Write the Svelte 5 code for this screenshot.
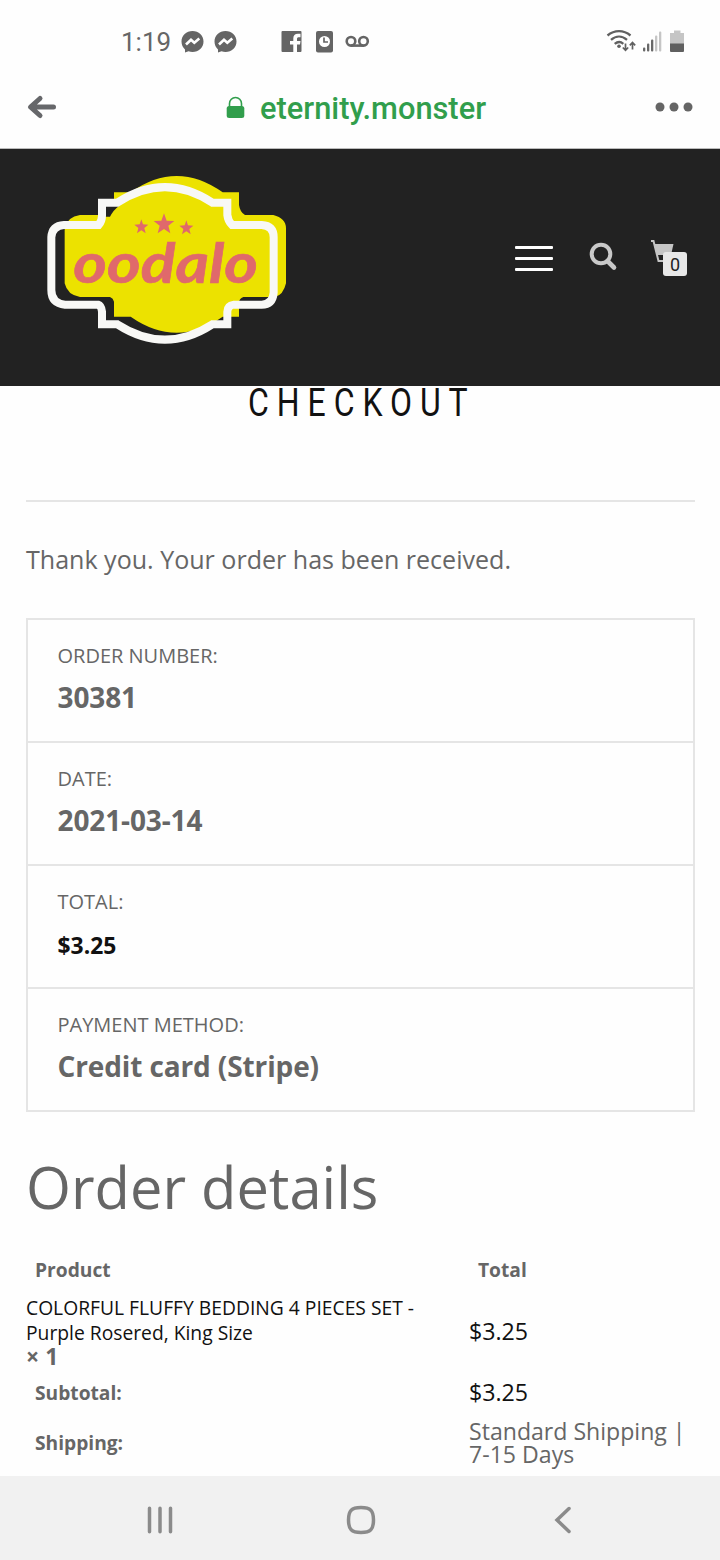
<script>
  const summary = [
    { label: 'ORDER NUMBER:', value: '30381' },
    { label: 'DATE:', value: '2021-03-14' },
    { label: 'TOTAL:', value: '$3.25', price: true },
    { label: 'PAYMENT METHOD:', value: 'Credit card (Stripe)' }
  ];
</script>

<div class="screen">
  <div class="status">
    <span class="time">1:19</span>
    <svg class="left-icons" width="198" height="28" viewBox="0 0 198 28">
      <g fill="#656565">
        <path d="M12.500 3C6.400 3 1.500 7.500 1.500 13.500c0 3.200 1.300 6 3.500 7.900V24.500l3.500-1.200c1.300.5 2.600.7 4 .7 6.200 0 11-4.600 11-10.500S18.700 3 12.500 3z" />
        <path d="M45.500 3c-6.100 0-11 4.500-11 10.500 0 3.200 1.300 6 3.500 7.900V24.500l3.500-1.200c1.300.5 2.600.7 4 .7 6.200 0 11-4.600 11-10.500S51.700 3 45.500 3z" />
        <path d="M102.500 3h18a1 1 0 0 1 1 1v19a1 1 0 0 1-1 1h-3.500v-7.500h3L120.500 13H117v-2c0-1.200.5-1.800 1.900-1.800h1.600V5.800h-2.600c-3 0-4.600 1.700-4.600 4.600V13H110v3.500h3.300V24h-10.800a1 1 0 0 1-1-1V4a1 1 0 0 1 1-1z" />
        <rect x="136" y="3" width="17" height="21.500" rx="2" />
      </g>
      <g fill="none" stroke="#fff" stroke-width="2.600">
        <path d="M6 16.500l5-4.800 3.300 3 5-4.200" />
        <path d="M39 16.500l5-4.800 3.300 3 5-4.200" />
      </g>
      <circle cx="144.500" cy="13.500" r="5.500" fill="#fff" />
      <path d="M144 9.500v4.500h4" fill="none" stroke="#656565" stroke-width="1.700" />
      <g fill="none" stroke="#656565" stroke-width="2.600">
        <circle cx="171" cy="13.300" r="4.300" />
        <circle cx="183.500" cy="13.300" r="4.300" />
        <path d="M171 17.600h12.500" />
      </g>
    </svg>
    <svg class="right-icons" width="84" height="28" viewBox="0 0 84 28">
      <g fill="none" stroke="#606060" stroke-width="2.300">
        <path d="M4.500 7.500c7-5.800 16-5.800 23 0" />
        <path d="M8 11.800c5-4.300 11-4.300 16 0" />
        <path d="M11.700 15.800c3-2.400 6-2.400 8.600 0" />
        <path d="M22.500 15.500v7M19.800 19.500l2.700 2.800 2.700-2.800M29.500 21.500v-7M26.800 17.300l2.700-2.800 2.700 2.800" stroke-width="1.700" />
      </g>
      <circle cx="16" cy="18.300" r="1.800" fill="#606060" />
      <g fill="#686868">
        <rect x="40" y="19.500" width="2.300" height="4" rx="1" />
        <rect x="44" y="15.500" width="2.300" height="8" rx="1" />
        <rect x="48" y="11.500" width="2.300" height="12" rx="1" />
      </g>
      <g fill="#c5c5c5">
        <rect x="52" y="7.500" width="2.300" height="16" rx="1" />
        <rect x="56" y="3.500" width="2.300" height="20" rx="1" />
        <path d="M67 5h4V2.500h6.500V5H81v11H67z" />
      </g>
      <path d="M67 15.500h14v7.500a1 1 0 0 1-1 1H68a1 1 0 0 1-1-1z" fill="#606060" />
    </svg>
  </div>

  <div class="address">
    <svg class="back" width="32" height="26" viewBox="0 0 32 26">
      <path d="M14 4.500L4.500 13l9.500 8.500M5 13h22.500" fill="none" stroke="#66676a" stroke-width="5" stroke-linecap="round" stroke-linejoin="round" />
    </svg>
    <svg class="lock" width="20" height="26" viewBox="0 0 20 26">
      <rect x=".7" y="12" width="17.600" height="12" rx="2.500" fill="#319e4c" />
      <path d="M3.500 13V9.500a6 6 0 0 1 12 0V13" fill="none" stroke="#319e4c" stroke-width="1.600" />
    </svg>
    <span class="domain">eternity.monster</span>
    <svg class="more" width="40" height="12" viewBox="0 0 40 12" fill="#656565">
      <circle cx="6" cy="6" r="4.500" /><circle cx="20" cy="6" r="4.500" /><circle cx="34" cy="6" r="4.500" />
    </svg>
  </div>

  <header>
    <svg class="logo" width="280" height="190" viewBox="0 0 840 570">
      <path fill="#ece200" d="M150 150H236Q250 142 252 120V82H302Q440-16 578 82H627V120Q630 142 645 150H730Q768 160 768 190V355Q760 390 735 396H640Q627 400 627 415V455H578Q440 551 302 455H252V410Q250 400 240 396H150Q112 390 104 355V190Q112 155 150 150Z" />
      <path fill="#222" d="M226 122H268Q250 135 240 155H223Z" />
      <path fill="none" stroke="#f8f8f6" stroke-width="24" d="M102 180H206Q216 168 216 152V113H262Q405 20 547 113H592V150Q594 168 606 180H695Q731 182 731 217V383Q728 419 695 419H612Q592 422 592 440V478H547Q405 570 262 478H216V440Q214 422 204 419H105Q64 415 64 375V217Q66 182 102 180Z" />
      <g fill="#e0696b">
        <path d="M402 145l8 22 23 1-18 14 6 23-19-13-19 13 6-23-18-14 23-1z" />
        <path d="M334 163l5 15 16 1-12 10 4 16-13-9-13 9 4-16-12-10 16-1z" />
        <path d="M469 166l5 15 16 1-12 10 4 16-13-9-13 9 4-16-12-10 16-1z" />
      </g>
      <text class="brand" x="130" y="355" textLength="554" lengthAdjust="spacingAndGlyphs">oodalo</text>
    </svg>
    <div class="tools">
      <div class="burger"><i></i><i></i><i></i></div>
      <svg class="search" width="30" height="30" viewBox="0 0 30 30" fill="none" stroke="#c9c9c9">
        <circle cx="12" cy="12" r="9.300" stroke-width="4" />
        <path d="M18.500 19l6.500 6.500" stroke-width="4.600" stroke-linecap="round" />
      </svg>
      <div class="cart">
        <svg width="26" height="28" viewBox="0 0 26 28">
          <path d="M0 2h2.500l5 20h12" fill="none" stroke="#c5c5c5" stroke-width="2" />
          <path d="M3.500 5h19L20 16H6z" fill="#c5c5c5" />
        </svg>
        <span class="badge">0</span>
      </div>
    </div>
  </header>

  <main>
    <h1><span>CHECKOUT</span></h1>
    <p class="thanks">Thank you. Your order has been received.</p>
    <ul>
      {#each summary as row}
        <li><span class="label">{row.label}</span><strong class:price={row.price}>{row.value}</strong></li>
      {/each}
    </ul>
    <h2>Order details</h2>
    <div class="table">
      <div class="row head"><b>Product</b><b class="th">Total</b></div>
      <div class="row item">
        <div class="product">COLORFUL FLUFFY BEDDING 4 PIECES SET -<br />Purple Rosered, King Size<strong>× 1</strong></div>
        <span class="amount">$3.25</span>
      </div>
      <div class="row sub"><b>Subtotal:</b><span class="amount">$3.25</span></div>
      <div class="row ship"><b>Shipping:</b><span class="method">Standard Shipping |<br />7-15 Days</span></div>
    </div>
  </main>

  <nav>
    <svg width="28" height="28" viewBox="0 0 28 28"><path d="M3.500 2.200v23.600M14 2.200v23.600M24.500 2.200v23.600" /></svg>
    <svg width="30" height="30" viewBox="0 0 30 30"><path d="M15 2.500C24.500 2.500 27.500 5.500 27.500 15S24.500 27.500 15 27.500 2.500 24.500 2.500 15 5.500 2.500 15 2.500z" /></svg>
    <svg width="18" height="28" viewBox="0 0 18 28"><path d="M15 2.500L3 14l12 11.500" /></svg>
  </nav>
</div>

<style>
  :global(body) { background: #fff; }
  .screen {
    width: 720px; height: 1560px; display: flex; flex-direction: column; overflow: hidden;
    box-sizing: border-box; background: #fefefe; color: #666; font-family: "Open Sans", sans-serif;
  }
  .screen * { box-sizing: border-box; }
  svg { display: block; flex: none; }
  .status { height: 68px; flex: none; display: flex; padding: 28px 33px 0 121px; }
  .time { width: 59px; font: 400 26px/28px Roboto, sans-serif; color: #666; white-space: nowrap; }
  .right-icons { margin-left: auto; }
  .address { height: 81px; flex: none; display: flex; align-items: center; padding: 0 26px 2px; border-bottom: 1px solid #bbb; }
  .lock { margin-left: 168px; }
  .domain { margin-left: 14px; font: 500 30.800px/36px Roboto, sans-serif; color: #319e4c; white-space: nowrap; padding-top: 4px; }
  .more { margin-left: auto; }
  header { height: 237px; flex: none; background: #222; display: flex; justify-content: space-between; padding: 16px 32px 0 30px; }
  .brand { font: italic 700 167px Lato, sans-serif; fill: #e0696b; stroke: #e0696b; stroke-width: 2px; }
  .tools { display: flex; padding-top: 74px; }
  .burger { width: 38px; display: flex; flex-direction: column; gap: 8px; padding-top: 7px; }
  .burger i { height: 3px; background: #fff; border-radius: 1px; }
  .search { margin: 3px 34px 0 36px; }
  .cart { position: relative; width: 37px; height: 40px; margin-left: -2px; }
  .badge { position: absolute; left: 12px; top: 13px; width: 24px; height: 24px; border-radius: 3px; background: #e8e8e8; color: #222; text-align: center; font: 400 18px/25px Roboto, sans-serif; }
  main { flex: 1; min-height: 0; padding: 0 25px 0 26px; }
  h1 { margin: 0; height: 116px; border-bottom: 2px solid #e5e5e5; text-align: center; font: 400 39px/34px Roboto, sans-serif; color: #111; }
  h1 span { display: inline-block; transform: scaleX(0.82); letter-spacing: 9.700px; margin-right: -2px; }
  .thanks { margin: 0; height: 116px; padding-top: 40px; font-size: 25.050px; line-height: 34px; white-space: nowrap; }
  ul { margin: 0; padding: 0; list-style: none; border: 2px solid #e5e5e5; }
  li { height: 123px; padding: 22px 30px 0 29.500px; border-bottom: 2px solid #e5e5e5; display: flex; flex-direction: column; }
  li:last-child { height: 121px; border-bottom: 0; }
  .label { font-size: 20px; line-height: 28px; }
  li strong { font-size: 28px; letter-spacing: -0.120px; line-height: 40px; margin-top: 7px; }
  li .price { font-size: 22.900px; color: #111; margin-top: 10px; letter-spacing: 0; }
  h2 { margin: 0; padding-top: 35px; height: 139px; font-weight: 400; font-size: 57.800px; line-height: 80px; white-space: nowrap; }
  .row { display: grid; grid-template-columns: 443px 1fr; align-items: center; }
  .row b { font-size: 19.200px; line-height: 26px; padding-left: 9px; }
  .head { height: 44px; padding-bottom: 6px; }
  .item { height: 74px; color: #111; }
  .product { font-size: 19.280px; line-height: 25px; white-space: nowrap; padding-bottom: 1px; }
  .product strong { display: block; color: #666; font-size: 23px; line-height: 23px; }
  .amount { font-size: 23.200px; color: #111; line-height: 30px; padding-bottom: 2px; }
  .sub { height: 48px; }
  .ship { height: 52px; }
  .method { font-size: 23.100px; line-height: 23px; white-space: nowrap; }
  nav { height: 84px; flex: none; background: #f1f1f1; display: flex; align-items: center; justify-content: space-between; padding: 3px 148px 0 146px; }
  nav svg:nth-child(2) { margin-right: 6px; }
  nav path { fill: none; stroke: #8b8b8b; stroke-width: 3.500; stroke-linecap: round; }
</style>
